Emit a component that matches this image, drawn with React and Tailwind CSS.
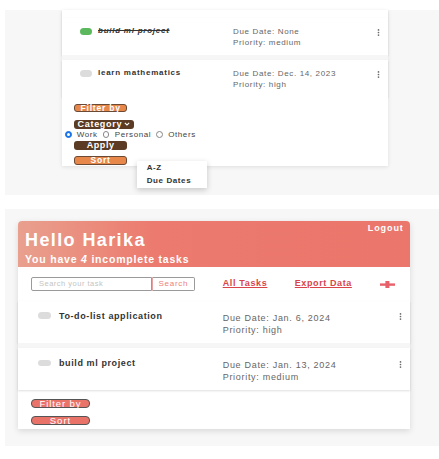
import React from "react";

const Kebab = () => (
  <svg width="3" height="7" viewBox="0 0 3 7" className="block">
    <circle cx="1.5" cy="0.9" r="0.85" fill="#6b6b6b" />
    <circle cx="1.5" cy="3.5" r="0.85" fill="#6b6b6b" />
    <circle cx="1.5" cy="6.1" r="0.85" fill="#6b6b6b" />
  </svg>
);

const Plus = () => (
  <svg width="15" height="7" viewBox="0 0 15 7" className="block">
    <rect x="0" y="2.4" width="15" height="2.4" fill="#e8606a" />
    <rect x="5.4" y="0" width="4" height="7" fill="#e8606a" />
  </svg>
);

function TopRow({ done, title, due, pri }) {
  return (
    <div className="h-[37px] bg-white shadow-[0_1px_2px_rgba(0,0,0,0.13)] flex items-start pt-[8px]">
      <div className="w-[171px] flex items-center h-[10px] pl-[18px]">
        {done ? (
          <span className="w-[12px] h-[7px] rounded-full bg-[#5cb85c]" />
        ) : (
          <span className="w-[12px] h-[7px] rounded-full bg-[#dcdcdc]" />
        )}
        {done ? (
          <span className="ml-[6px] text-[8px] leading-[10px] font-bold italic line-through tracking-[0.75px] text-[#333]">
            {title}
          </span>
        ) : (
          <span className="ml-[6px] text-[8px] leading-[10px] font-bold tracking-[0.75px] text-[#333]">
            {title}
          </span>
        )}
      </div>
      <div className="mt-[1.4px] flex flex-col text-[8px] leading-[10.6px] tracking-[0.65px] text-[#666]">
        <span>{due}</span>
        <span>{pri}</span>
      </div>
      <div className="ml-auto mr-[8px] mt-[2.5px]">
        <Kebab />
      </div>
    </div>
  );
}

function BottomRow({ title, due, pri }) {
  return (
    <div className="h-[42px] bg-white shadow-[0_1px_2px_rgba(0,0,0,0.13)] flex items-start pt-[8.7px]">
      <div className="w-[204.7px] flex items-center h-[12px] pl-[20px]">
        <span className="w-[13px] h-[6.5px] rounded-full bg-[#dcdcdc]" />
        <span className="ml-[8px] text-[9px] leading-[12px] font-bold tracking-[0.6px] text-[#333]">
          {title}
        </span>
      </div>
      <div className="mt-[1.85px] flex flex-col text-[9px] leading-[12.3px] tracking-[0.7px] text-[#666]">
        <span>{due}</span>
        <span>{pri}</span>
      </div>
      <div className="ml-auto mr-[8.3px] mt-[3.8px]">
        <Kebab />
      </div>
    </div>
  );
}

export default function App() {
  return (
    <div className="w-[439px] h-[459px] bg-white overflow-hidden pt-[10px] font-['Liberation_Sans',Arial,sans-serif]">
      {/* Top screenshot */}
      <div className="ml-[5px] h-[185px] bg-[#f7f7f7] pl-[57px] relative">
        <div className="w-[326px] h-[156px] bg-white shadow-[0_1px_4px_rgba(0,0,0,0.1)] flex flex-col">
          <div className="h-[8px] bg-white shadow-[0_1px_2px_rgba(0,0,0,0.12)]" />
          <div className="h-[0px]" />
          <TopRow done title="build ml project" due="Due Date: None" pri="Priority: medium" />
          <div className="h-[5px] bg-[#f6f6f6]" />
          <TopRow title="learn mathematics" due="Due Date: Dec. 14, 2023" pri="Priority: high" />
          <div className="flex-1 bg-white pl-[3px] pt-[6.7px] flex flex-col items-start">
            <div className="ml-[9px] w-[53.3px] h-[8.7px] rounded-[3px] bg-[#e8874a] border border-[#6b4a35] flex items-center justify-center text-white text-[8.5px] leading-none tracking-[0.8px] font-bold">
              Filter by
            </div>
            <div className="ml-[9px] mt-[7.3px] w-[59.7px] h-[9px] rounded-[3px] bg-[#5b3b24] flex items-center justify-center text-white text-[9px] leading-none tracking-[0.7px] font-bold">
              Category
              <svg width="6" height="4" viewBox="0 0 6 4" className="ml-[2px]">
                <path d="M0.8 0.8 L3 3 L5.2 0.8" stroke="white" strokeWidth="1.1" fill="none" />
              </svg>
            </div>
            <div className="mt-[3px] h-[6px] flex items-center text-[8px] leading-none tracking-[0.6px] text-[#444]">
              <span className="w-[6.7px] h-[6.7px] rounded-full bg-[#1a73e8] border border-[#1a73e8] flex items-center justify-center">
                <span className="w-[2.5px] h-[2.5px] rounded-full bg-white" />
              </span>
              <span className="ml-[5px]">Work</span>
              <span className="ml-[5px] w-[6.7px] h-[6.7px] rounded-full border border-[#888] bg-white" />
              <span className="ml-[5.5px]">Personal</span>
              <span className="ml-[5px] w-[6.7px] h-[6.7px] rounded-full border border-[#888] bg-white" />
              <span className="ml-[5.3px]">Others</span>
            </div>
            <div className="ml-[9px] mt-[3.7px] w-[53.3px] h-[8.3px] rounded-[3px] bg-[#5b3b24] flex items-center justify-center text-white text-[9px] leading-none tracking-[0.6px] font-bold">
              Apply
            </div>
            <div className="ml-[9px] mt-[6.3px] w-[53.3px] h-[8.7px] rounded-[3px] bg-[#e8874a] border border-[#6b4a35] flex items-center justify-center text-white text-[8.5px] leading-none tracking-[0.8px] font-bold">
              Sort
            </div>
          </div>
        </div>
        <div className="absolute left-[131.7px] top-[151px] w-[70.6px] h-[26.7px] bg-white shadow-[0_2px_6px_rgba(0,0,0,0.2)] pl-[10px] pt-[2.2px] flex flex-col text-[8px] font-bold tracking-[0.6px] text-[#333] leading-[9px]">
          <span>A-Z</span>
          <span className="mt-[4.3px]">Due Dates</span>
        </div>
      </div>

      {/* Bottom screenshot */}
      <div className="mt-[14px] ml-[5px] h-[237px] bg-[#f7f7f7] pl-[13px] pt-[12px]">
        <div className="w-[392px] h-[208px] bg-white rounded-t-[4px] shadow-[0_2px_6px_rgba(0,0,0,0.13)] flex flex-col">
          <div className="h-[46px] rounded-t-[4px] bg-[linear-gradient(to_right,#e9a08e_0%,#ec7a6e_35%,#eb766b_100%)] px-[7px] flex flex-col">
            <div className="flex items-start justify-between">
              <span className="mt-[8.7px] text-[18px] leading-[20px] font-bold text-white tracking-[1.4px]">
                Hello Harika
              </span>
              <span className="mt-[2.2px] mr-[-0.7px] text-[9px] leading-[11px] font-bold text-white tracking-[0.9px]">
                Logout
              </span>
            </div>
            <span className="mt-[3.6px] text-[10.5px] leading-[12px] font-bold text-white tracking-[0.8px]">
              You have <span className="italic">4</span> incomplete tasks
            </span>
          </div>
          <div className="h-[34px] flex items-center pl-[13px]">
            <div className="flex">
              <div className="w-[120.7px] h-[14px] border border-[#9a9a9a] rounded-l-[2px] pl-[7px] flex items-center text-[7.5px] tracking-[0.5px] text-[#c4c4c4]">
                Search your task
              </div>
              <div className="w-[43.3px] h-[14px] border border-[#9a9a9a] border-l-[#e8a0a0] rounded-r-[2px] flex items-center justify-center text-[8px] tracking-[0.7px] text-[#f07f7a]">
                Search
              </div>
            </div>
            <span className="ml-[27.7px] text-[9px] font-bold underline tracking-[0.65px] text-[#d9444a]">
              All Tasks
            </span>
            <span className="ml-[27.4px] text-[9px] font-bold underline tracking-[0.6px] text-[#d9444a]">
              Export Data
            </span>
            <span className="ml-[28.2px]">
              <Plus />
            </span>
          </div>
          <BottomRow title="To-do-list application" due="Due Date: Jan. 6, 2024" pri="Priority: high" />
          <div className="h-[5.4px] bg-[#f6f6f6]" />
          <BottomRow title="build ml project" due="Due Date: Jan. 13, 2024" pri="Priority: medium" />
          <div className="flex-1 pl-[13px] pt-[9px] flex flex-col items-start">
            <div className="w-[59px] h-[8.3px] rounded-[4px] bg-[#ea7369] border border-[#555] flex items-center justify-center text-white text-[9.5px] leading-none tracking-[0.9px]">
              Filter by
            </div>
            <div className="mt-[8.7px] w-[59px] h-[9px] rounded-[4px] bg-[#ea7369] border border-[#555] flex items-center justify-center text-white text-[9.5px] leading-none tracking-[1px]">
              Sort
            </div>
          </div>
        </div>
      </div>
    </div>
  );
}
